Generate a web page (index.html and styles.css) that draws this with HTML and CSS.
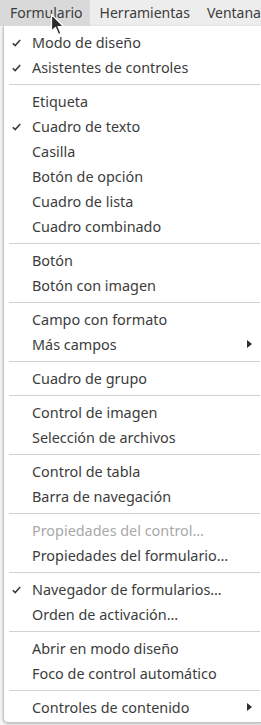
FILE: index.html
```html
<!DOCTYPE html>
<html lang="es">
<head>
    <meta charset="UTF-8">
    <title>Formulario</title>
    <link rel="stylesheet" href="styles.css">
</head>
<body>
    <div class="menubar">
        <div class="top-item active">Formulario</div>
        <div class="top-item">Herramientas</div>
        <div class="top-item">Ventana</div>
    </div>

    <div class="menu">
        <div class="item"><span class="check"><svg width="9" height="8" viewBox="0 0 9 8"><path d="M0.8 4.2 L3.2 6.6 L8.2 1" fill="none" stroke="#3c3c3c" stroke-width="1.6"/></svg></span>Modo de diseño</div>
        <div class="item"><span class="check"><svg width="9" height="8" viewBox="0 0 9 8"><path d="M0.8 4.2 L3.2 6.6 L8.2 1" fill="none" stroke="#3c3c3c" stroke-width="1.6"/></svg></span>Asistentes de controles</div>
        <div class="sep"></div>
        <div class="item"><span class="check"></span>Etiqueta</div>
        <div class="item"><span class="check"><svg width="9" height="8" viewBox="0 0 9 8"><path d="M0.8 4.2 L3.2 6.6 L8.2 1" fill="none" stroke="#3c3c3c" stroke-width="1.6"/></svg></span>Cuadro de texto</div>
        <div class="item"><span class="check"></span>Casilla</div>
        <div class="item"><span class="check"></span>Botón de opción</div>
        <div class="item"><span class="check"></span>Cuadro de lista</div>
        <div class="item"><span class="check"></span>Cuadro combinado</div>
        <div class="sep"></div>
        <div class="item"><span class="check"></span>Botón</div>
        <div class="item"><span class="check"></span>Botón con imagen</div>
        <div class="sep"></div>
        <div class="item"><span class="check"></span>Campo con formato</div>
        <div class="item"><span class="check"></span>Más campos<span class="arrow"></span></div>
        <div class="sep"></div>
        <div class="item"><span class="check"></span>Cuadro de grupo</div>
        <div class="sep"></div>
        <div class="item"><span class="check"></span>Control de imagen</div>
        <div class="item"><span class="check"></span>Selección de archivos</div>
        <div class="sep"></div>
        <div class="item"><span class="check"></span>Control de tabla</div>
        <div class="item"><span class="check"></span>Barra de navegación</div>
        <div class="sep"></div>
        <div class="item disabled"><span class="check"></span>Propiedades del control…</div>
        <div class="item"><span class="check"></span>Propiedades del formulario…</div>
        <div class="sep"></div>
        <div class="item"><span class="check"><svg width="9" height="8" viewBox="0 0 9 8"><path d="M0.8 4.2 L3.2 6.6 L8.2 1" fill="none" stroke="#3c3c3c" stroke-width="1.6"/></svg></span>Navegador de formularios…</div>
        <div class="item"><span class="check"></span>Orden de activación…</div>
        <div class="sep"></div>
        <div class="item"><span class="check"></span>Abrir en modo diseño</div>
        <div class="item"><span class="check"></span>Foco de control automático</div>
        <div class="sep"></div>
        <div class="item"><span class="check"></span>Controles de contenido<span class="arrow"></span></div>
    </div>

    <!-- mouse pointer over the menubar -->
    <svg class="pointer" width="16" height="24" viewBox="0 0 16 24">
        <path d="M1.5 1.5 L1.5 18 L5.5 14.5 L8.5 21.5 L11 20.5 L8 13.5 L13.5 13.5 Z" fill="#2b2b2b" stroke="#ffffff" stroke-width="1.2" stroke-linejoin="round"/>
    </svg>
</body>
</html>
```

FILE: styles.css
```css
body{
   margin:0;
   background:#f6f6f5;
   font-family:"Noto Sans","Open Sans","DejaVu Sans",sans-serif;
   font-size:14.4px;
   color:#3c3c3c;
   width:261px;
   height:725px;
   overflow:hidden;
   position:relative;
 }
 .menubar{
   display:flex;
   height:26px;
   background:#ededed;
   white-space:nowrap;
   font-size:14px;
 }
 .top-item{
   padding:0 7px 0 10px;
   line-height:25px;
   flex-shrink:0;
 }
 .top-item.active{
   background:#d9d9d9;
 }
 .menu{
   margin-left:3px;
   width:262px;
   box-sizing:border-box;
   background:#ffffff;
   border:1px solid #c4c4c4;
   border-top:none;
   border-radius:0 0 5px 5px;
   padding:4px 0 2px 0;
   box-shadow:0 1px 3px rgba(0,0,0,0.25);
 }
 .item{
   display:flex;
   align-items:center;
   height:25px;
   white-space:nowrap;
   position:relative;
 }
 .check{
   width:28px;
   flex-shrink:0;
   box-sizing:border-box;
   padding-left:8px;
   display:flex;
   align-items:center;
 }
 .disabled{
   color:#a8a8a8;
 }
 .arrow{
   position:absolute;
   left:243px;
   top:8px;
   width:0;
   height:0;
   border-top:4.5px solid transparent;
   border-bottom:4.5px solid transparent;
   border-left:5px solid #2e2e2e;
 }
 .sep{
   height:9px;
   display:flex;
   align-items:center;
   padding:0 4px 0 5px;
 }
 .sep::after{
   content:"";
   flex:1;
   height:1px;
   background:#d2d2d2;
 }
 .pointer{
   position:absolute;
   left:50px;
   top:13px;
 }
```
